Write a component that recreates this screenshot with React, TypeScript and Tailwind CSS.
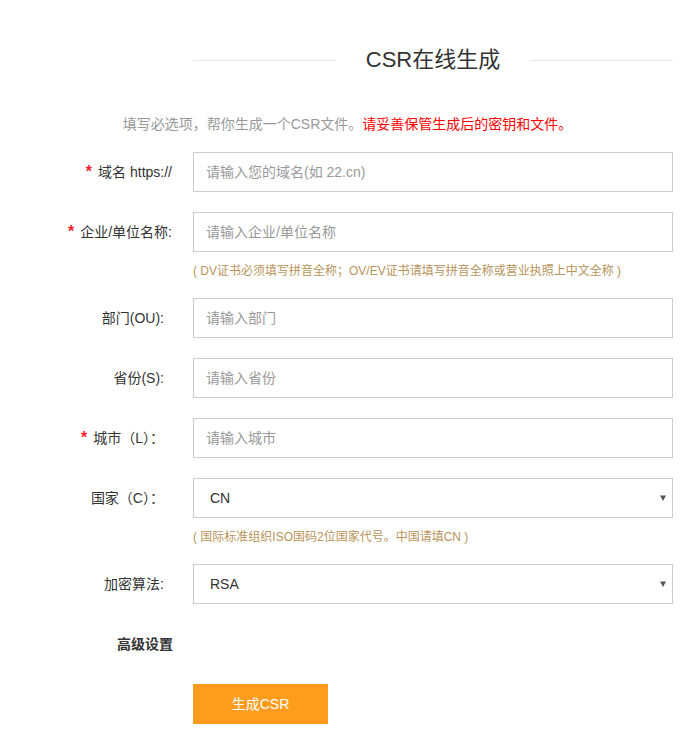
const font = "font-['Liberation_Sans','Noto_Sans_CJK_SC',sans-serif]"

type Field = {
  label: string
  required?: boolean
  placeholder?: string
  options?: string[]
  hint?: string
  narrow?: boolean
}

const fields: Field[] = [
  { label: '域名 https://', required: true, placeholder: '请输入您的域名(如 22.cn)' },
  {
    label: '企业/单位名称:',
    required: true,
    placeholder: '请输入企业/单位名称',
    hint: '( DV证书必须填写拼音全称；OV/EV证书请填写拼音全称或营业执照上中文全称 )',
  },
  { label: '部门(OU):', placeholder: '请输入部门', narrow: true },
  { label: '省份(S):', placeholder: '请输入省份', narrow: true },
  { label: '城市（L）：', required: true, placeholder: '请输入城市', narrow: true },
  { label: '国家（C）：', options: ['CN'], hint: '( 国际标准组织ISO国码2位国家代号。中国请填CN )', narrow: true },
  { label: '加密算法:', options: ['RSA', 'ECC'], narrow: true },
]

function Row({ field }: { field: Field }) {
  return (
    <div className="flex flex-col">
      <div className="flex items-center">
        <label
          className={`w-[173px] shrink-0 text-right text-[14px] text-[#333] ${field.narrow ? 'pr-[9px]' : 'pr-[1px]'}`}
        >
          {field.required && <span className="mr-[6px] text-[16px] font-bold text-[#f5222d]">*</span>}
          {field.label}
        </label>
        <div className="ml-[20px] w-[480px]">
          {field.options ? (
            <div className="relative h-[40px] border border-[#ccc] bg-white">
              <select className="h-full w-full appearance-none bg-transparent pl-[16px] text-[14px] text-[#333] outline-none">
                {field.options.map((o) => (
                  <option key={o}>{o}</option>
                ))}
              </select>
              <svg
                className="pointer-events-none absolute right-[6px] top-[16px]"
                width="6"
                height="6"
                viewBox="0 0 6 6"
              >
                <path d="M0 0.5h6L3 6z" fill="#555" />
              </svg>
            </div>
          ) : (
            <input
              className="h-[40px] w-full border border-[#ccc] px-[12px] text-[14px] text-[#333] outline-none placeholder:text-[#999]"
              placeholder={field.placeholder}
            />
          )}
        </div>
      </div>
      {field.hint && (
        <div className="ml-[193px] mt-[12px] text-[12px] leading-[14px] text-[#b8935a]">{field.hint}</div>
      )}
    </div>
  )
}

export default function App() {
  return (
    <div className={`${font} w-[695px] bg-white pt-[46px] pb-[9px]`}>
      <div className="ml-[193px] flex w-[480px] items-center">
        <div className="h-px flex-1 bg-[#e5e5e5]" />
        <h1 className="px-[30px] text-[22px] leading-[28px] text-[#333]">CSR在线生成</h1>
        <div className="h-px flex-1 bg-[#e5e5e5]" />
      </div>

      <p className="mt-[42px] text-center text-[14px] leading-[16px] text-[#999]">
        填写必选项，帮你生成一个CSR文件。<span className="text-[#ff0000]">请妥善保管生成后的密钥和文件。</span>
      </p>

      <form className="mt-[20px] flex flex-col gap-[20px]" onSubmit={(e) => e.preventDefault()}>
        {fields.map((f) => (
          <Row key={f.label} field={f} />
        ))}

        <div className="mt-[12px] flex">
          <div className="w-[173px] text-right text-[14px] font-bold leading-[16px] text-[#333]">高级设置</div>
        </div>

        <div className="mt-[12px] ml-[193px]">
          <button className="h-[40px] w-[135px] bg-[#ff9c1e] text-[14px] text-white">生成CSR</button>
        </div>
      </form>
    </div>
  )
}
